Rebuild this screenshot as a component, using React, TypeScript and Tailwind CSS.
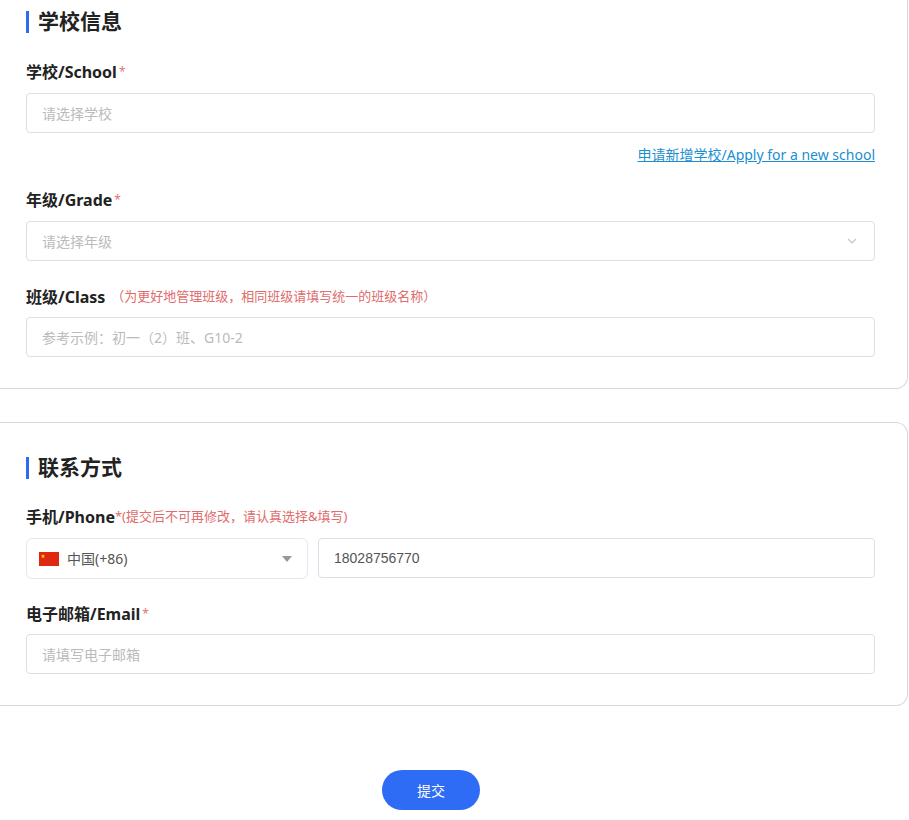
import React from "react";

const Label = ({ children, note }: { children: React.ReactNode; note?: React.ReactNode }) => (
  <div className="flex items-center h-[22px] text-[16px] font-bold text-[#222]">
    {children}
    {note}
  </div>
);

const Input = ({ ph, value, chevron }: { ph?: string; value?: string; chevron?: boolean }) => (
  <div className="h-[40px] border border-[#dcdfe6] rounded-[4px] flex items-center px-[15px] text-[14px] bg-white">
    <span className={value ? "text-[#555] flex-1" : "text-[#bbb] flex-1"}>{value || ph}</span>
    {chevron && (
      <svg width="14" height="14" viewBox="0 0 14 14"><path d="M3 5l4 4 4-4" fill="none" stroke="#c0c4cc" strokeWidth="1.2" /></svg>
    )}
  </div>
);

const Title = ({ t }: { t: string }) => (
  <div className="flex items-center h-[26px]">
    <div className="w-[3px] h-[22px] bg-[#2d6bf0] mr-[9px]" />
    <span className="text-[21px] font-bold text-[#222]">{t}</span>
  </div>
);

export default function App() {
  return (
    <div className="w-[909px] h-[820px] bg-white overflow-hidden" style={{ fontFamily: '"Noto Sans", "Noto Sans CJK SC", sans-serif' }}>
      <div className="border-r border-b border-[#d8d8d8] rounded-br-[12px] w-[908px] pl-[26px] pr-[32px] pt-[9px] pb-[31px]">
        <Title t="学校信息" />
        <div className="mt-[26px]"><Label>学校/School<span className="text-[#e57373] text-[12px] font-normal ml-[2px]">*</span></Label></div>
        <div className="mt-[10px]"><Input ph="请选择学校" /></div>
        <div className="mt-[12px] text-right text-[14px] text-[#1a8fd0] underline h-[20px] leading-[20px]">申请新增学校/Apply for a new school</div>
        <div className="mt-[24px]"><Label>年级/Grade<span className="text-[#e57373] text-[12px] font-normal ml-[2px]">*</span></Label></div>
        <div className="mt-[10px]"><Input ph="请选择年级" chevron /></div>
        <div className="mt-[25px]"><Label note={<span className="text-[#e06c6c] text-[13px] font-normal ml-[6px]">（为更好地管理班级，相同班级请填写统一的班级名称）</span>}>班级/Class</Label></div>
        <div className="mt-[9px]"><Input ph="参考示例：初一（2）班、G10-2" /></div>
      </div>

      <div className="mt-[33px] border border-[#d8d8d8] border-l-0 rounded-r-[12px] w-[908px] pl-[26px] pr-[32px] pt-[32px] pb-[31px]">
        <Title t="联系方式" />
        <div className="mt-[25px]"><Label note={<span className="text-[#e06c6c] text-[13px] font-normal">*(提交后不可再修改，请认真选择&填写)</span>}>手机/Phone</Label></div>
        <div className="mt-[10px] flex gap-[10px]">
          <div className="w-[282px] h-[41px] border border-[#e4e7ed] rounded-[6px] flex items-center px-[12px] text-[14px] text-[#555]">
            <svg width="20" height="14" viewBox="0 0 20 14" className="mr-[8px]"><rect width="20" height="14" fill="#de2910" /><polygon points="4,2 4.6,3.6 6.2,3.6 4.9,4.6 5.4,6.2 4,5.2 2.6,6.2 3.1,4.6 1.8,3.6 3.4,3.6" fill="#ffde00" /></svg>
            <span className="flex-1">中国(+86)</span>
            <svg width="12" height="8" viewBox="0 0 12 8" className="mr-[2px]"><path d="M1 1h10L6 7z" fill="#999" /></svg>
          </div>
          <div className="flex-1 h-[40px] border border-[#dcdfe6] rounded-[4px] flex items-center px-[15px] text-[14px] text-[#555]" style={{ fontFamily: '"Liberation Sans", sans-serif' }}>18028756770</div>
        </div>
        <div className="mt-[24px]"><Label>电子邮箱/Email<span className="text-[#e57373] text-[12px] font-normal ml-[2px]">*</span></Label></div>
        <div className="mt-[9px]"><Input ph="请填写电子邮箱" /></div>
      </div>

      <div className="flex mt-[64px] pl-[382px]">
        <button className="w-[98px] h-[40px] rounded-full bg-[#2e6cf6] text-white text-[14px]">提交</button>
      </div>
    </div>
  );
}
